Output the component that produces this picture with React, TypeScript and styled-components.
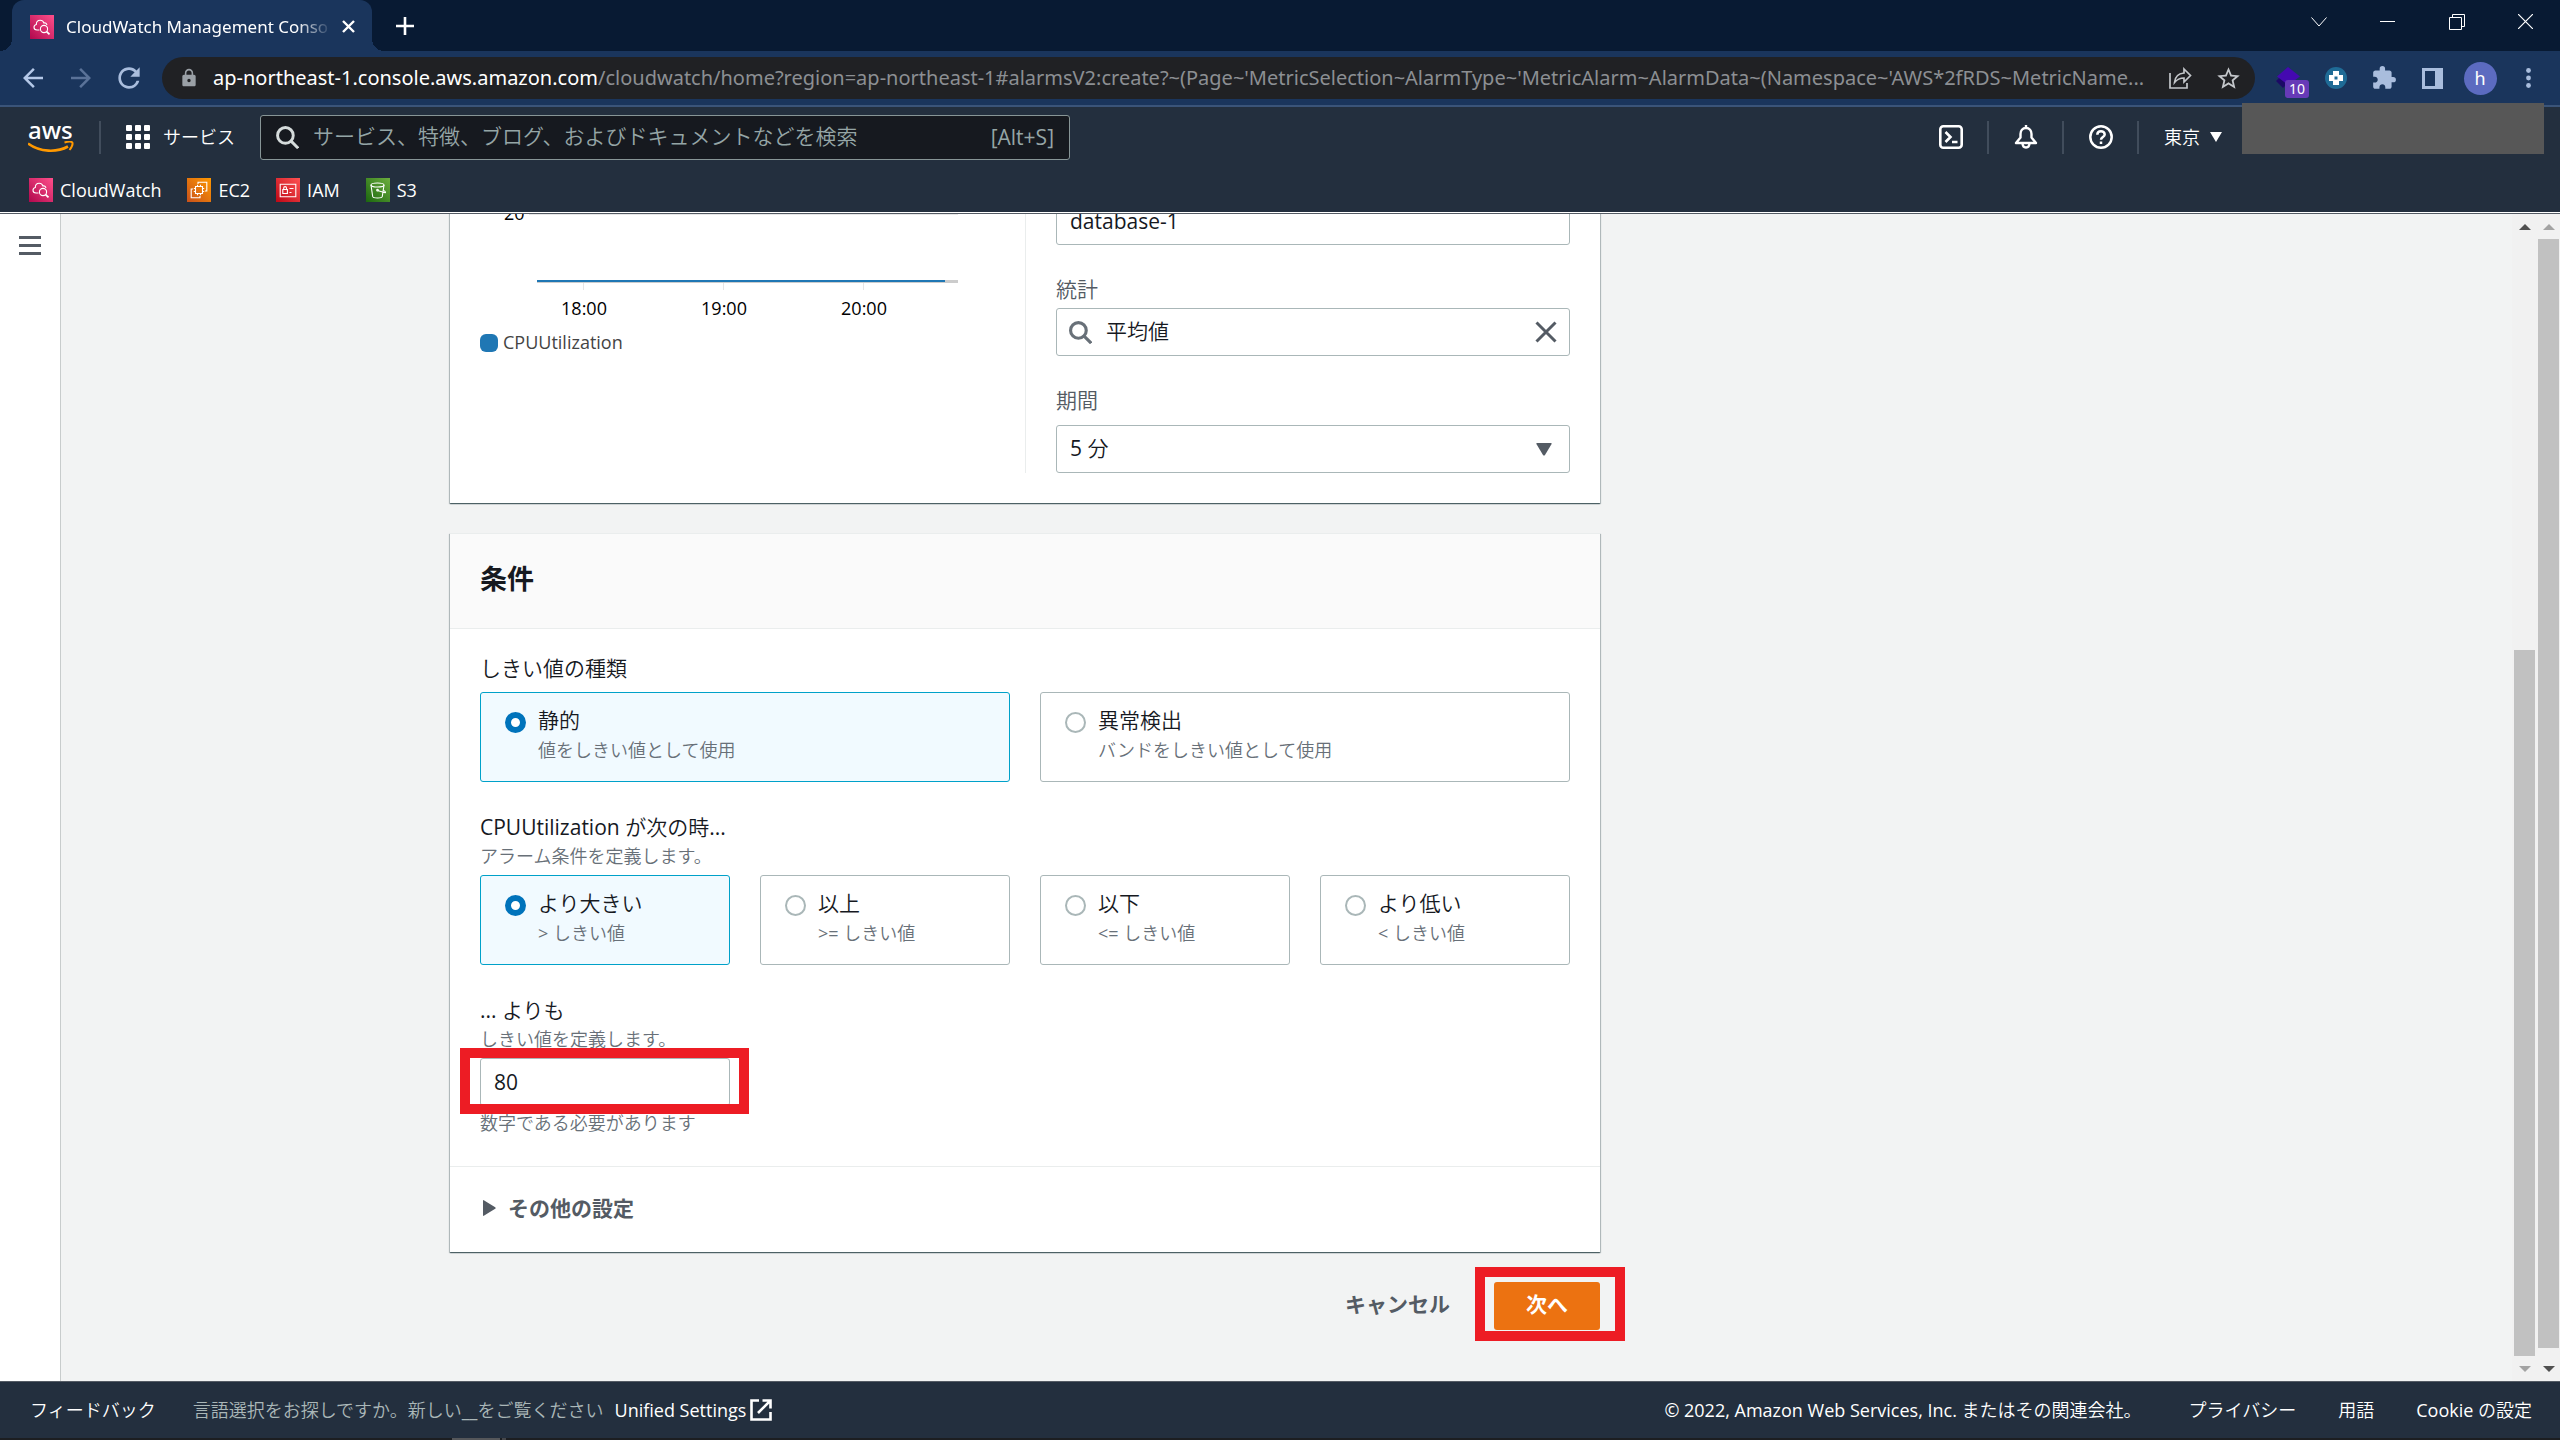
import React from "react";
import styled, { createGlobalStyle, css } from "styled-components";
import { MdArrowBack, MdArrowForward, MdRefresh, MdLock, MdStarBorder, MdExtension } from "react-icons/md";

const c = {
  frame: "#081a33",
  toolbar: "#1a355c",
  toolbarIcon: "#a9bddd",
  omnibox: "#202124",
  nav: "#232f3e",
  navLine: "#414d5c",
  ink: "#16191f",
  muted: "#687078",
  strong: "#545b64",
  line: "#eaeded",
  border: "#aab7b8",
  page: "#f2f3f3",
  blue: "#0073bb",
  red: "#ed1c24",
};

const chromeFont = `"Noto Sans", sans-serif`;
const boldFont = `"Open Sans", "Noto Sans CJK JP", sans-serif`;

const Global = createGlobalStyle`
  *, *::before, *::after { box-sizing: border-box; }
  body {
    margin: 0;
    font-family: "Open Sans", "Noto Sans CJK JP DemiLight", "Noto Sans CJK JP", sans-serif;
    font-size: 21px;
    line-height: 30px;
    color: ${c.ink};
  }
  button, input, select { font: inherit; color: inherit; margin: 0; }
  button { border: 0; padding: 0; background: none; cursor: pointer; }
  a { color: inherit; text-decoration: none; }
  h2, p, fieldset { margin: 0; padding: 0; border: 0; }
  svg { display: block; flex: none; }
`;

const Screen = styled.div`
  height: 100vh;
  display: flex;
  flex-direction: column;
  overflow: hidden;
`;

/* ---------- browser frame ---------- */

const TabStrip = styled.div`
  flex: none;
  display: flex;
  height: 51px;
  padding-left: 12px;
  background: ${c.frame};
  color: #fff;
  font-family: ${chromeFont};
`;

const Tab = styled.div`
  position: relative;
  width: 360px;
  display: flex;
  align-items: center;
  padding: 2px 12px 0 18px;
  border-radius: 12px 12px 0 0;
  background: ${c.toolbar};
  &::before, &::after {
    content: "";
    position: absolute;
    bottom: 0;
    width: 12px;
    height: 12px;
  }
  &::before { left: -12px; background: radial-gradient(circle at 0 0, transparent 12px, ${c.toolbar} 12px); }
  &::after { right: -12px; background: radial-gradient(circle at 100% 0, transparent 12px, ${c.toolbar} 12px); }
`;

const TabTitle = styled.span`
  flex: 1;
  margin: 0 8px 0 12px;
  overflow: hidden;
  white-space: nowrap;
  font-size: 17px;
  mask-image: linear-gradient(to right, #000 230px, transparent 266px);
`;

const IconButton = styled.button<{ $size?: number; $tint?: string }>`
  flex: none;
  display: flex;
  align-items: center;
  justify-content: center;
  width: ${(p) => p.$size ?? 30}px;
  height: ${(p) => p.$size ?? 30}px;
  color: ${(p) => p.$tint ?? "inherit"};
`;

const NewTab = styled(IconButton)`
  align-self: center;
  margin-left: 21px;
`;

const WindowControls = styled.div`
  display: flex;
  margin-left: auto;
  height: 43px;
  button { width: 69px; height: 43px; }
`;

const Toolbar = styled.div`
  flex: none;
  display: flex;
  align-items: center;
  gap: 18px;
  height: 56px;
  padding: 0 17px 0 18px;
  background: ${c.toolbar};
  border-bottom: 2px solid #3a5479;
  color: ${c.toolbarIcon};
  font-family: ${chromeFont};
`;

const Omnibox = styled.div`
  flex: 1;
  min-width: 0;
  display: flex;
  align-items: center;
  height: 42px;
  padding: 0 12px 0 17px;
  border-radius: 21px;
  background: ${c.omnibox};
  color: #9aa0a6;
`;

const Url = styled.div`
  flex: 1;
  min-width: 0;
  margin: 0 18px 0 14px;
  overflow: hidden;
  white-space: nowrap;
  font-size: 20px;
  color: #8c8f93;
  b { font-weight: 400; color: #fff; }
`;

const OmniActions = styled.div`
  display: flex;
  gap: 18px;
  color: #c4c7cb;
`;

const ExtButton = styled(IconButton)`
  position: relative;
`;

const ExtBadge = styled.span`
  position: absolute;
  left: 12px;
  top: 17px;
  width: 24px;
  height: 18px;
  border-radius: 3px;
  background: #673ab7;
  color: #fff;
  font-size: 14px;
  line-height: 18px;
  text-align: center;
`;

const Avatar = styled.span`
  flex: none;
  width: 33px;
  height: 33px;
  border-radius: 50%;
  background: #5c6bc0;
  color: #fff;
  font-size: 18px;
  line-height: 32px;
  text-align: center;
`;

/* ---------- console header ---------- */

const ConsoleHeader = styled.header`
  flex: none;
  position: relative;
  background: ${c.nav};
  color: #fff;
  font-size: 18px;
  border-bottom: 1px solid ${c.strong};
  &::after {
    content: "";
    display: block;
    height: 1px;
    background: #fff;
  }
`;

const MainRow = styled.div`
  display: flex;
  align-items: center;
  height: 60px;
`;

const Logo = styled.a`
  width: 46px;
  margin-left: 28px;
  font-family: ${chromeFont};
  font-size: 24px;
  font-weight: 500;
  line-height: 16px;
  svg { margin-top: 3px; }
`;

const Rule = styled.span`
  width: 2px;
  height: 33px;
  margin: 0 25px;
  background: ${c.navLine};
`;

const Services = styled.button`
  display: flex;
  align-items: center;
  gap: 13px;
  margin-right: 25px;
  white-space: nowrap;
`;

const SearchBox = styled.label`
  flex: 0 1 810px;
  display: flex;
  align-items: center;
  gap: 14px;
  height: 45px;
  padding: 0 15px;
  border: 1px solid #879596;
  border-radius: 3px;
  background: ${c.ink};
  color: #95a5a6;
  font-size: 21px;
  input {
    flex: 1;
    min-width: 0;
    padding: 0 0 2px;
    border: 0;
    outline: 0;
    background: none;
  }
  input::placeholder { color: #95a5a6; opacity: 1; }
`;

const Tools = styled.div`
  display: flex;
  align-items: center;
  margin-left: auto;
  margin-right: 338px;
`;

const ToolButton = styled.button`
  display: flex;
  align-items: center;
  justify-content: center;
  width: 75px;
  height: 33px;
  border-right: 2px solid ${c.navLine};
`;

const Region = styled.button`
  display: flex;
  align-items: center;
  gap: 10px;
  padding-left: 25px;
`;

const Redaction = styled.div`
  position: absolute;
  top: -4px;
  right: 16px;
  width: 302px;
  height: 51px;
  background: #575757;
`;

const Favorites = styled.nav`
  display: flex;
  align-items: center;
  gap: 26px;
  height: 45px;
  padding: 1px 29px 0;
  a { display: flex; align-items: center; gap: 7px; font-weight: 500; }
`;

/* ---------- page ---------- */

const Body = styled.div`
  flex: 1;
  min-height: 0;
  display: flex;
  background: ${c.page};
`;

const SideRail = styled.aside`
  flex: none;
  width: 61px;
  padding: 16px 15px;
  background: #fff;
  border-right: 1px solid #c8cccc;
`;

const Viewport = styled.main`
  flex: 1;
  min-width: 0;
  display: flex;
  flex-direction: column;
  justify-content: flex-end;
  overflow: hidden;
  padding: 0 30px 51px 389px;
`;

const Wizard = styled.form`
  display: flex;
  flex-direction: column;
  gap: 30px;
  max-width: 1150px;
`;

const Panel = styled.section`
  background: #fff;
  border-top: 1px solid ${c.line};
  box-shadow: 0 1px 1px 0 rgba(0, 28, 36, 0.5), 1px 1px 1px 0 rgba(0, 28, 36, 0.2), -1px 1px 1px 0 rgba(0, 28, 36, 0.2);
`;

const PanelHeader = styled.header`
  padding: 28px 30px 33px;
  border-bottom: 1px solid ${c.line};
  background: #fafafa;
  h2 { font-family: ${boldFont}; font-size: 27px; line-height: 33px; font-weight: 700; }
`;

const MetricBody = styled.div`
  display: grid;
  grid-template-columns: 1fr 1fr;
  padding: 30px;
`;

const ChartText = styled.text<{ $tone?: string }>`
  font-size: 18px;
  fill: ${(p) => p.$tone ?? "#000"};
`;

const MetricFields = styled.div`
  display: flex;
  flex-direction: column;
  gap: 29px;
  padding-left: 30px;
  border-left: 1px solid ${c.line};
`;

const Field = styled.div<{ $gap: number }>`
  display: flex;
  flex-direction: column;
  gap: ${(p) => p.$gap}px;
  label { color: ${c.strong}; }
`;

const control = css`
  width: 100%;
  height: 48px;
  border: 1px solid ${c.border};
  border-radius: 3px;
  background: #fff;
  color: ${c.ink};
  outline: 0;
`;

const TextInput = styled.input`
  ${control}
  padding: 0 13px;
`;

const ComboBox = styled.div`
  ${control}
  display: flex;
  align-items: center;
  padding: 0 8px 0 12px;
  input { flex: 1; min-width: 0; margin-left: 14px; padding: 0 0 2px; border: 0; outline: 0; background: none; }
`;

const SelectWrap = styled.div`
  display: grid;
  align-items: center;
  > * { grid-area: 1 / 1; }
  svg { justify-self: end; margin-right: 18px; pointer-events: none; }
`;

const Select = styled.select`
  ${control}
  appearance: none;
  padding: 0 13px 2px;
`;

const Conditions = styled.div`
  display: flex;
  flex-direction: column;
  gap: 30px;
  padding: 24px 30px 29px;
`;

const Hint = styled.p`
  padding-top: 1px;
  font-size: 18px;
  line-height: 27px;
  color: ${c.muted};
`;

const Tiles = styled.div<{ $cols: number; $top: number }>`
  display: grid;
  grid-template-columns: repeat(${(p) => p.$cols}, 1fr);
  gap: 30px;
  margin-top: ${(p) => p.$top}px;
`;

const TileBox = styled.label<{ $on: boolean }>`
  display: flex;
  gap: 12px;
  padding: 11px 24px 17px;
  border: 1px solid ${(p) => (p.$on ? "#00a1c9" : c.border)};
  border-radius: 3px;
  background: ${(p) => (p.$on ? "#f1faff" : "#fff")};
  line-height: 33px;
`;

const TileNote = styled(Hint)`
  display: block;
  padding-top: 0;
`;

const Radio = styled.input`
  appearance: none;
  flex: none;
  width: 21px;
  height: 21px;
  margin: 8px 0 0;
  border: 2px solid ${c.border};
  border-radius: 50%;
  background: #fff;
  &:checked { border: 6px solid ${c.blue}; }
`;

const Threshold = styled.div`
  position: relative;
  width: 250px;
  margin: 5px 0 3px;
`;

const Highlight = styled.span<{ $x: number; $y: number; $w: number; $h: number }>`
  position: absolute;
  left: ${(p) => p.$x}px;
  top: ${(p) => p.$y}px;
  width: ${(p) => p.$w}px;
  height: ${(p) => p.$h}px;
  border: 10px solid ${c.red};
  pointer-events: none;
`;

const Expander = styled.button`
  display: flex;
  align-items: center;
  gap: 12px;
  width: 100%;
  height: 86px;
  padding: 0 33px 3px;
  border-top: 1px solid ${c.line};
  color: ${c.strong};
  font-family: ${boldFont};
  font-weight: 700;
`;

const Actions = styled.div`
  display: flex;
  justify-content: flex-end;
  align-items: center;
  gap: 44px;
`;

const Cancel = styled.button`
  padding-bottom: 4px;
  color: ${c.strong};
  font-family: ${boldFont};
  font-weight: 700;
`;

const NextWrap = styled.div`
  position: relative;
`;

const Next = styled.button`
  height: 48px;
  padding: 0 32px 4px;
  border-radius: 3px;
  background: #ec7211;
  color: #fff;
  font-family: ${boldFont};
  font-weight: 700;
`;

const ScrollBar = styled.div`
  flex: none;
  display: flex;
  flex-direction: column;
  width: 24px;
  padding: 0 1px 0 2px;
  background: #f1f1f1;
`;

const ScrollArrow = styled.span<{ $dark: boolean; $down?: boolean }>`
  height: 25px;
  display: flex;
  align-items: center;
  justify-content: center;
  &::before {
    content: "";
    border: 6px solid transparent;
    border-top-width: ${(p) => (p.$down ? 6 : 0)}px;
    border-bottom-width: ${(p) => (p.$down ? 0 : 6)}px;
    border-${(p) => (p.$down ? "top" : "bottom")}-color: ${(p) => (p.$dark ? "#505050" : "#a3a3a3")};
  }
`;

const ScrollPart = styled.span<{ $grow: number; $thumb?: boolean }>`
  flex: ${(p) => p.$grow} 0 0;
  background: ${(p) => (p.$thumb ? "#c1c1c1" : "transparent")};
`;

/* ---------- footer ---------- */

const Footer = styled.footer`
  flex: none;
  display: flex;
  align-items: center;
  gap: 42px;
  height: 57px;
  padding: 0 28px 0 30px;
  border-top: 1px solid ${c.strong};
  background: ${c.nav};
  color: #fff;
  font-size: 18px;
  white-space: nowrap;
`;

const LanguageNote = styled.span`
  flex: 1;
  display: flex;
  align-items: center;
  margin-left: -5px;
  color: ${c.border};
  a { display: flex; align-items: center; gap: 4px; margin-left: 11px; color: #fff; font-weight: 500; }
`;

const Copyright = styled.span`
  margin-right: 5px;
`;

const TaskbarEdge = styled.div`
  flex: none;
  display: flex;
  gap: 2px;
  height: 2px;
  padding-left: 452px;
  background: #1c1e21;
  &::before { content: ""; width: 48px; background: #55575a; }
  &::after { content: ""; width: 4px; background: #44464a; }
`;

/* ---------- drawings ---------- */

const swatches = {
  cw: ["#b0084d", "#ff4f8b"],
  ec2: ["#c8511b", "#ff9900"],
  iam: ["#bd0816", "#ff5252"],
  s3: ["#1b660f", "#6cae3e"],
};

function ServiceIcon({ kind, id }: { kind: keyof typeof swatches; id: string }) {
  const [from, to] = swatches[kind];
  return (
    <svg width="24" height="24" viewBox="0 0 24 24" fill="none" stroke="#fff" strokeWidth="1.1" aria-hidden="true">
      <defs>
        <linearGradient id={id} x1="0" y1="1" x2="1" y2="0">
          <stop offset="0" stopColor={from} />
          <stop offset="1" stopColor={to} />
        </linearGradient>
      </defs>
      <rect width="24" height="24" fill={`url(#${id})`} stroke="none" />
      {kind === "cw" && (
        <>
          <path d="M9.500 15H7C5.200 15 4 13.900 4 12.300c0-1.500 1-2.500 2.300-2.800C6.300 7 8 5.300 10.200 5.300c1.900 0 3.100 1 3.800 2.700 1.500-.4 2.700.4 2.900 2" />
          <circle cx="14" cy="14" r="3.600" />
          <path d="M16.600 16.700l2.900 2.700" strokeWidth="1.800" />
        </>
      )}
      {kind === "ec2" && (
        <>
          <path d="M8.500 8.500h7v7h-7zM10.500 8.500V6.800M13.500 8.500V6.800M10.500 15.500v1.700M13.500 15.500v1.700M8.500 10.500H6.800M8.500 13.500H6.800M15.500 10.500h1.700M15.500 13.500h1.700" />
          <path d="M11 6V4.200h8.800V13H18M6 11H4.200v8.800H13V18" />
        </>
      )}
      {kind === "iam" && (
        <>
          <path d="M4.200 6.200h15.600v12.600H4.200z" />
          <path d="M6.800 11.500h4.600v4H6.800zM7.700 11.500V10a1.400 1.400 0 0 1 2.800 0v1.500M13.500 10.500h4M13.500 14.500h2" />
        </>
      )}
      {kind === "s3" && (
        <>
          <ellipse cx="11.500" cy="7" rx="6.500" ry="2" />
          <path d="M5 7l1.700 11.500c.2 2 9.400 2 9.600 0L18 7M11.500 12.500l7.500 2.200c1 0 .6-1.300-1.500-2.200" />
          <circle cx="11.500" cy="12.200" r=".8" />
        </>
      )}
    </svg>
  );
}

const Lens = styled.svg`
  color: ${(p) => p.color};
`;

function SearchGlyph({ tint, width }: { tint: string; width: number }) {
  return (
    <Lens color={tint} width="23" height="23" viewBox="0 0 22 22" fill="none" stroke="currentColor" strokeWidth={width} aria-hidden="true">
      <circle cx="9" cy="9" r="7.500" />
      <path d="M14.200 14.200l7 7" />
    </Lens>
  );
}

function Chart() {
  const hours = [
    { x: 104, label: "18:00" },
    { x: 244, label: "19:00" },
    { x: 384, label: "20:00" },
  ];
  return (
    <svg width="500" height="170" viewBox="0 0 500 170" role="img" aria-label="CPUUtilization">
      <ChartText x="24" y="23">20</ChartText>
      <path d="M49 17.500H478" stroke="#e6e6e6" />
      <path d="M57 84.500H478" stroke="#ccc" strokeWidth="3" />
      <path d="M57 84H465" stroke="#1f77b4" strokeWidth="2" />
      {hours.map((h) => (
        <g key={h.label}>
          <path d={`M${h.x - 0.5} 86v7`} stroke="#e6e6e6" />
          <ChartText x={h.x} y="118" textAnchor="middle">{h.label}</ChartText>
        </g>
      ))}
      <rect x="0" y="137" width="18" height="18" rx="6" fill="#1f77b4" />
      <ChartText x="23" y="152" $tone="#444">CPUUtilization</ChartText>
    </svg>
  );
}

function Tile(props: { name: string; title: string; note: string; checked: boolean; onPick: () => void }) {
  return (
    <TileBox $on={props.checked}>
      <Radio type="radio" name={props.name} checked={props.checked} onChange={props.onPick} />
      <span>
        {props.title}
        <TileNote as="span">{props.note}</TileNote>
      </span>
    </TileBox>
  );
}

const kinds = [
  { title: "静的", note: "値をしきい値として使用" },
  { title: "異常検出", note: "バンドをしきい値として使用" },
];

const operators = [
  { title: "より大きい", note: "> しきい値" },
  { title: "以上", note: ">= しきい値" },
  { title: "以下", note: "<= しきい値" },
  { title: "より低い", note: "< しきい値" },
];

export default function App() {
  const [kind, setKind] = React.useState(0);
  const [operator, setOperator] = React.useState(0);

  return (
    <Screen>
      <Global />
      <TabStrip>
        <Tab>
          <ServiceIcon kind="cw" id="tab-cw" />
          <TabTitle>CloudWatch Management Conso</TabTitle>
          <IconButton $size={24}>
            <svg width="13" height="13" viewBox="0 0 13 13" stroke="#fff" strokeWidth="2.400"><path d="M1 1l11 11M12 1L1 12" /></svg>
          </IconButton>
        </Tab>
        <NewTab $size={24}>
          <svg width="18" height="18" viewBox="0 0 18 18" stroke="#fff" strokeWidth="2.600"><path d="M9 0v18M0 9h18" /></svg>
        </NewTab>
        <WindowControls>
          <IconButton><svg width="16" height="10" viewBox="0 0 16 10" fill="none" stroke="#fff"><path d="M.5.5L8 9 15.500.5" /></svg></IconButton>
          <IconButton><svg width="15" height="1" viewBox="0 0 15 1"><rect width="15" height="1" fill="#fff" /></svg></IconButton>
          <IconButton><svg width="16" height="16" viewBox="0 0 16 16" fill="none" stroke="#fff"><path d="M.5 3.500h12v12H.5zM3.500 3.500v-3h12v12h-3" /></svg></IconButton>
          <IconButton><svg width="15" height="15" viewBox="0 0 15 15" stroke="#fff" strokeWidth="1.200"><path d="M0 0l15 15M15 0L0 15" /></svg></IconButton>
        </WindowControls>
      </TabStrip>

      <Toolbar>
        <IconButton $tint="#b4c8e8"><MdArrowBack size={30} /></IconButton>
        <IconButton $tint="#5a7298"><MdArrowForward size={30} /></IconButton>
        <IconButton><MdRefresh size={32} /></IconButton>
        <Omnibox>
          <MdLock size={20} />
          <Url>
            <b>ap-northeast-1.console.aws.amazon.com</b>
            /cloudwatch/home?region=ap-northeast-1#alarmsV2:create?~(Page~'MetricSelection~AlarmType~'MetricAlarm~AlarmData~(Namespace~'AWS*2fRDS~MetricName...
          </Url>
          <OmniActions>
            <IconButton>
              <svg width="24" height="22" viewBox="0 0 24 22" fill="none" stroke="currentColor" strokeWidth="1.700">
                <path d="M2 6v15h17v-5" />
                <path d="M16 2l6.500 6.500L16 15v-4c-4 0-7 1.500-9.500 4.500C7 10 10.500 6.500 16 6z" />
              </svg>
            </IconButton>
            <IconButton><MdStarBorder size={27} /></IconButton>
          </OmniActions>
        </Omnibox>
        <ExtButton>
          <svg width="24" height="22" viewBox="0 0 24 22"><path d="M5 9l7 7-5 5-7-7z" fill="#1c0a66" /><path d="M12 0l12 9.500L12 18 1 9.500z" fill="#4409b0" /></svg>
          <ExtBadge>10</ExtBadge>
        </ExtButton>
        <IconButton>
          <svg width="22" height="22" viewBox="0 0 22 22"><circle cx="11" cy="11" r="11" fill="#1f6b96" /><path d="M8 4h6v4h4v6h-4v4H8v-4H4V8h4z" fill="#fff" /><rect x="9.500" y="9.500" width="3" height="3" fill="#1f6b96" /></svg>
        </IconButton>
        <IconButton><MdExtension size={26} /></IconButton>
        <IconButton>
          <svg width="21" height="21" viewBox="0 0 21 21"><path fillRule="evenodd" d="M0 0h21v21H0zM3 3v15h10V3z" fill="currentColor" /></svg>
        </IconButton>
        <IconButton><Avatar>h</Avatar></IconButton>
        <IconButton>
          <svg width="5" height="20" viewBox="0 0 5 20" fill="currentColor"><circle cx="2.500" cy="2.500" r="2.400" /><circle cx="2.500" cy="10" r="2.400" /><circle cx="2.500" cy="17.500" r="2.400" /></svg>
        </IconButton>
      </Toolbar>

      <ConsoleHeader>
        <MainRow>
          <Logo href="#">
            aws
            <svg width="46" height="12" viewBox="0 0 46 12" fill="none" stroke="#ff9900">
              <path d="M0 2.500c12 9 29 9 40 3" strokeWidth="2.600" />
              <path d="M36.500 1.500c4-1.200 7-1.200 7.800 0 .7 1.500-.8 5-2.800 7.500" strokeWidth="2" />
            </svg>
          </Logo>
          <Rule />
          <Services>
            <svg width="24" height="24" viewBox="0 0 24 24" fill="#fff">
              {[0, 9, 18].map((y) => [0, 9, 18].map((x) => <rect key={`${x}-${y}`} x={x} y={y} width="6" height="6" rx="1" />))}
            </svg>
            サービス
          </Services>
          <SearchBox>
            <SearchGlyph tint="#d5dbdb" width={2.8} />
            <input aria-label="検索" placeholder="サービス、特徴、ブログ、およびドキュメントなどを検索" />
            [Alt+S]
          </SearchBox>
          <Tools>
            <ToolButton>
              <svg width="24" height="24" viewBox="0 0 24 24" fill="none" stroke="#fff" strokeWidth="2.600"><rect x="1.300" y="1.300" width="21.400" height="21.400" rx="3" /><path d="M6.500 7l5 5-5 5M13 17h5.500" /></svg>
            </ToolButton>
            <ToolButton>
              <svg width="24" height="24" viewBox="0 0 24 24" fill="none" stroke="#fff" strokeWidth="2.400" strokeLinejoin="round"><path d="M12 0v3M12 3C8.500 3 6.500 5.500 6.500 9v3.500L2 18h20l-4.500-5.500V9c0-3.500-2-6-5.500-6zM8.500 18c0 6 7 6 7 0" /></svg>
            </ToolButton>
            <ToolButton>
              <svg width="24" height="24" viewBox="0 0 24 24" fill="none" stroke="#fff" strokeWidth="2.500"><circle cx="12" cy="12" r="10.700" /><path d="M8.300 9.800c0-5 7.400-4.600 7.400-.4 0 2.600-3.700 2.600-3.700 5.400M12 16.500V19" /></svg>
            </ToolButton>
            <Region>
              東京
              <svg width="12" height="10" viewBox="0 0 12 10"><path d="M0 0h12L6 10z" fill="#fff" /></svg>
            </Region>
          </Tools>
        </MainRow>
        <Redaction />
        <Favorites>
          <a href="#"><ServiceIcon kind="cw" id="fav-cw" />CloudWatch</a>
          <a href="#"><ServiceIcon kind="ec2" id="fav-ec2" />EC2</a>
          <a href="#"><ServiceIcon kind="iam" id="fav-iam" />IAM</a>
          <a href="#"><ServiceIcon kind="s3" id="fav-s3" />S3</a>
        </Favorites>
      </ConsoleHeader>

      <Body>
        <SideRail>
          <IconButton>
            <svg width="22" height="19" viewBox="0 0 22 19" fill={c.strong}><rect width="22" height="3" /><rect y="8" width="22" height="3" /><rect y="16" width="22" height="3" /></svg>
          </IconButton>
        </SideRail>

        <Viewport>
          <Wizard onSubmit={(e) => e.preventDefault()}>
            <Panel>
              <MetricBody>
                <Chart />
                <MetricFields>
                  <TextInput defaultValue="database-1" aria-label="database-1" />
                  <Field $gap={4}>
                    <label htmlFor="statistic">統計</label>
                    <ComboBox>
                      <SearchGlyph tint={c.muted} width={3} />
                      <input id="statistic" defaultValue="平均値" />
                      <IconButton type="button" $tint={c.strong}>
                        <svg width="22" height="22" viewBox="0 0 22 22" stroke="currentColor" strokeWidth="3"><path d="M1.500 1.500l19 19M20.500 1.500l-19 19" /></svg>
                      </IconButton>
                    </ComboBox>
                  </Field>
                  <Field $gap={10}>
                    <label htmlFor="period">期間</label>
                    <SelectWrap>
                      <Select id="period" defaultValue="5"><option value="5">5 分</option></Select>
                      <svg width="16" height="13" viewBox="0 0 16 13"><path d="M1 0h14q1 0 .6 1L9 12q-1 1-2 0L.4 1Q0 0 1 0z" fill={c.strong} /></svg>
                    </SelectWrap>
                  </Field>
                </MetricFields>
              </MetricBody>
            </Panel>

            <Panel>
              <PanelHeader><h2>条件</h2></PanelHeader>
              <Conditions>
                <div role="radiogroup" aria-labelledby="kind-label">
                  <div id="kind-label">しきい値の種類</div>
                  <Tiles $cols={2} $top={9}>
                    {kinds.map((k, i) => (
                      <Tile key={k.title} name="kind" {...k} checked={kind === i} onPick={() => setKind(i)} />
                    ))}
                  </Tiles>
                </div>
                <div role="radiogroup" aria-labelledby="operator-label">
                  <div id="operator-label">CPUUtilization が次の時...</div>
                  <Hint>アラーム条件を定義します。</Hint>
                  <Tiles $cols={4} $top={5}>
                    {operators.map((o, i) => (
                      <Tile key={o.title} name="operator" {...o} checked={operator === i} onPick={() => setOperator(i)} />
                    ))}
                  </Tiles>
                </div>
                <div>
                  <label htmlFor="threshold">... よりも</label>
                  <Hint>しきい値を定義します。</Hint>
                  <Threshold>
                    <TextInput id="threshold" defaultValue="80" />
                    <Highlight $x={-20} $y={-10} $w={289} $h={66} />
                  </Threshold>
                  <Hint>数字である必要があります</Hint>
                </div>
              </Conditions>
              <Expander type="button">
                <svg width="13" height="16" viewBox="0 0 13 16"><path d="M0 1q0-1.400 1.200-.6l11 6.800q1 .8 0 1.600l-11 6.800Q0 16.400 0 15z" fill={c.strong} /></svg>
                その他の設定
              </Expander>
            </Panel>

            <Actions>
              <Cancel type="button">キャンセル</Cancel>
              <NextWrap>
                <Next type="submit">次へ</Next>
                <Highlight $x={-19} $y={-15} $w={150} $h={74} />
              </NextWrap>
            </Actions>
          </Wizard>
        </Viewport>

        <ScrollBar>
          <ScrollArrow $dark />
          <ScrollPart $grow={411} />
          <ScrollPart $grow={706} $thumb />
          <ScrollArrow $dark={false} $down />
        </ScrollBar>
        <ScrollBar>
          <ScrollArrow $dark={false} />
          <ScrollPart $grow={1109} $thumb />
          <ScrollPart $grow={8} />
          <ScrollArrow $dark $down />
        </ScrollBar>
      </Body>

      <Footer>
        <a href="#">フィードバック</a>
        <LanguageNote>
          言語選択をお探しですか。新しい__をご覧ください
          <a href="#">
            Unified Settings
            <svg width="22" height="22" viewBox="0 0 22 22" fill="none" stroke="#fff" strokeWidth="2.600"><path d="M9 1.500H1.500v19h19V13M12.500 1.500h8v8M20.500 1.500L8 14" /></svg>
          </a>
        </LanguageNote>
        <Copyright>© 2022, Amazon Web Services, Inc. またはその関連会社。</Copyright>
        <a href="#">プライバシー</a>
        <a href="#">用語</a>
        <a href="#">Cookie の設定</a>
      </Footer>
      <TaskbarEdge />
    </Screen>
  );
}
